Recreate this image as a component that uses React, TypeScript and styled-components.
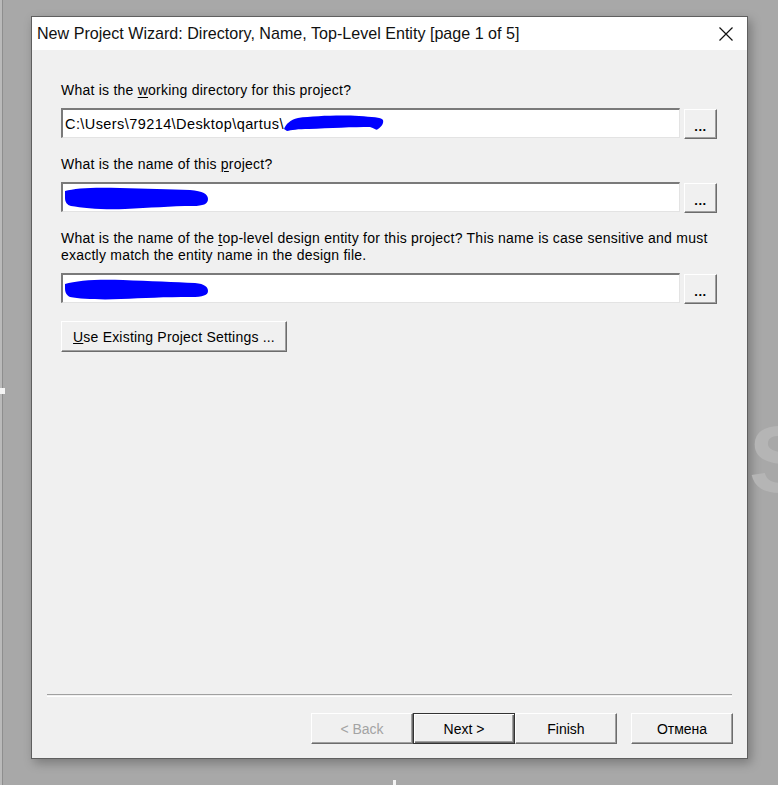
import { FC, ReactNode } from 'react'
import styled, { createGlobalStyle, css } from 'styled-components'

const GlobalStyle = createGlobalStyle`
  html, body {
    margin: 0;
    padding: 0;
  }
  body {
    font-family: "Liberation Sans", Arial, sans-serif;
    font-size: 14px;
    color: #000;
  }
`

const Desktop = styled.div`
  position: relative;
  width: 778px;
  height: 785px;
  overflow: hidden;
  padding: 16px 0 0 31px;
  box-sizing: border-box;
  background: linear-gradient(
    to right,
    #bababa 0 2px,
    #8e8e8e 2px 3px,
    #a8a8a8 3px
  );
`

const Watermark = styled.span`
  position: absolute;
  left: 749px;
  top: 413px;
  font-family: "Liberation Sans", Arial, sans-serif;
  font-weight: bold;
  font-size: 94px;
  color: #b5b5b5;
  line-height: 1;
`

const Speck = styled.span<{ $x: number; $y: number; $w: number; $h: number }>`
  position: absolute;
  left: ${(p) => p.$x}px;
  top: ${(p) => p.$y}px;
  width: ${(p) => p.$w}px;
  height: ${(p) => p.$h}px;
  background: #f4f4f4;
`

const Dialog = styled.div`
  width: 717px;
  height: 743px;
  box-sizing: border-box;
  border: 1px solid #5f5f5f;
  background: #f0f0f0;
  display: flex;
  flex-direction: column;
  box-shadow: 3px 4px 10px rgba(0, 0, 0, 0.28);
`

const TitleBar = styled.div`
  height: 33px;
  background: #fff;
  display: flex;
  align-items: center;
  justify-content: space-between;
  padding: 0 13px 0 5px;
  flex-shrink: 0;
`

const Title = styled.span`
  font-family: "Liberation Sans", Arial, sans-serif;
  font-size: 16.1px;
  color: #111;
`

const CloseIcon = styled.svg`
  width: 16px;
  height: 16px;
  display: block;
`

const Content = styled.div`
  flex: 1;
  padding: 32px 30px 0 29px;
`

const Group = styled.div`
  margin-bottom: 17px;
`

const Label = styled.div`
  line-height: 17px;
  margin-bottom: 9px;
  letter-spacing: 0.23px;

  u {
    text-decoration-thickness: 1px;
    text-underline-offset: 2px;
  }
`

const FieldRow = styled.div`
  display: flex;
  align-items: flex-start;
  gap: 4px;
`

const TextBox = styled.div`
  width: 619px;
  height: 30px;
  box-sizing: border-box;
  background: #fff;
  border-style: solid;
  border-width: 2px 1px 1px 2px;
  border-color: #7a7a7a #e3e3e3 #e3e3e3 #7a7a7a;
  display: flex;
  align-items: center;
  padding-left: 2px;
  font-size: 14.5px;
  letter-spacing: 0.42px;
  white-space: nowrap;
  overflow: hidden;
`

const raised = css`
  box-sizing: border-box;
  background: #f0f0f0;
  border: 1px solid;
  border-color: #fff #6c6c6c #6c6c6c #fff;
  box-shadow: inset -1px -1px #a0a0a0;
  font-family: "Liberation Sans", Arial, sans-serif;
  font-size: 14px;
  color: #000;
  padding: 0;
  cursor: default;
`

const BrowseButton = styled.button`
  ${raised}
  width: 33px;
  height: 30px;
  margin-top: 1px;
  font-weight: bold;
  font-size: 13px;
  letter-spacing: 0.5px;
  line-height: 1;
  padding-top: 4px;
`

const SettingsButton = styled.button`
  ${raised}
  width: 226px;
  height: 31px;
  letter-spacing: 0.2px;
`

const Footer = styled.div`
  flex-shrink: 0;
`

const Separator = styled.div`
  height: 1px;
  margin: 0 15px 0 15px;
  border-top: 1px solid #a0a0a0;
  border-bottom: 1px solid #fff;
`

const ButtonRow = styled.div`
  display: flex;
  justify-content: flex-end;
  padding: 16px 14px 14px 0;
`

const WizardButton = styled.button<{
  $isDefault?: boolean
  $gap?: boolean
  $dimmed?: boolean
}>`
  ${raised}
  width: 102px;
  height: 31px;
  margin-left: ${(p) => (p.$gap ? '14px' : '0')};
  color: ${(p) => (p.$dimmed ? '#a3a3a3' : '#000')};

  ${(p) =>
    p.$isDefault &&
    css`
      border-color: #333;
      box-shadow: inset 1px 1px #fff, inset -1px -1px #6c6c6c,
        inset -2px -2px #a0a0a0;
    `}
`

const Blob = styled.svg`
  display: block;
  flex-shrink: 0;
`

type FieldProps = {
  label: ReactNode
  children?: ReactNode
}

const Field: FC<FieldProps> = ({ label, children }) => (
  <Group>
    <Label>{label}</Label>
    <FieldRow>
      <TextBox>{children}</TextBox>
      <BrowseButton>...</BrowseButton>
    </FieldRow>
  </Group>
)

const Scribble: FC<{ width: number; height: number; d: string }> = ({
  width,
  height,
  d,
}) => (
  <Blob width={width} height={height} viewBox={`0 0 ${width} ${height}`}>
    <path d={d} fill="#0000ff" />
  </Blob>
)

export default function App() {
  return (
    <>
      <GlobalStyle />
      <Desktop>
        <Dialog>
          <TitleBar>
            <Title>
              New Project Wizard: Directory, Name, Top-Level Entity [page 1 of 5]
            </Title>
            <CloseIcon viewBox="0 0 16 16">
              <path
                d="M1.5 1.5 L14.5 14.5 M14.5 1.5 L1.5 14.5"
                stroke="#111"
                strokeWidth="1.2"
              />
            </CloseIcon>
          </TitleBar>

          <Content>
            <Field
              label={
                <>
                  What is the <u>w</u>orking directory for this project?
                </>
              }
            >
              C:\Users\79214\Desktop\qartus\
              <Scribble
                width={100}
                height={17}
                d="M0 14 C2 9 6 5 14 3 C30 1 55 0 75 1 C88 2 97 2 99 5 C100 9 97 12 94 14 C92 16 90 13 86 12 C70 12 45 13 25 14 C14 14 7 15 3 16 Z"
              />
            </Field>

            <Field
              label={
                <>
                  What is the name of this <u>p</u>roject?
                </>
              }
            >
              <Scribble
                width={144}
                height={24}
                d="M0 5 C10 2 30 1 55 2 C80 3 105 3 125 4 C138 5 143 8 143 13 C143 18 138 20 128 20 C105 20 85 22 60 23 C38 24 18 22 6 20 C2 19 0 16 0 12 Z"
              />
            </Field>

            <Field
              label={
                <>
                  What is the name of the <u>t</u>op-level design entity for
                  this project? This name is case sensitive and must exactly
                  match the entity name in the design file.
                </>
              }
            >
              <Scribble
                width={144}
                height={22}
                d="M0 6 C12 2 35 1 58 2 C85 3 110 4 130 5 C140 6 143 9 143 13 C143 17 138 19 126 19 C100 19 78 20 56 21 C36 22 16 21 5 19 C1 17 0 14 0 10 Z"
              />
            </Field>

            <SettingsButton>
              <u>U</u>se Existing Project Settings ...
            </SettingsButton>
          </Content>

          <Footer>
            <Separator />
            <ButtonRow>
              <WizardButton $dimmed>&lt; Back</WizardButton>
              <WizardButton $isDefault>Next &gt;</WizardButton>
              <WizardButton>Finish</WizardButton>
              <WizardButton $gap>Отмена</WizardButton>
            </ButtonRow>
          </Footer>
        </Dialog>
        <Watermark>S</Watermark>
        <Speck $x={0} $y={388} $w={5} $h={6} />
        <Speck $x={393} $y={780} $w={3} $h={5} />
      </Desktop>
    </>
  )
}
